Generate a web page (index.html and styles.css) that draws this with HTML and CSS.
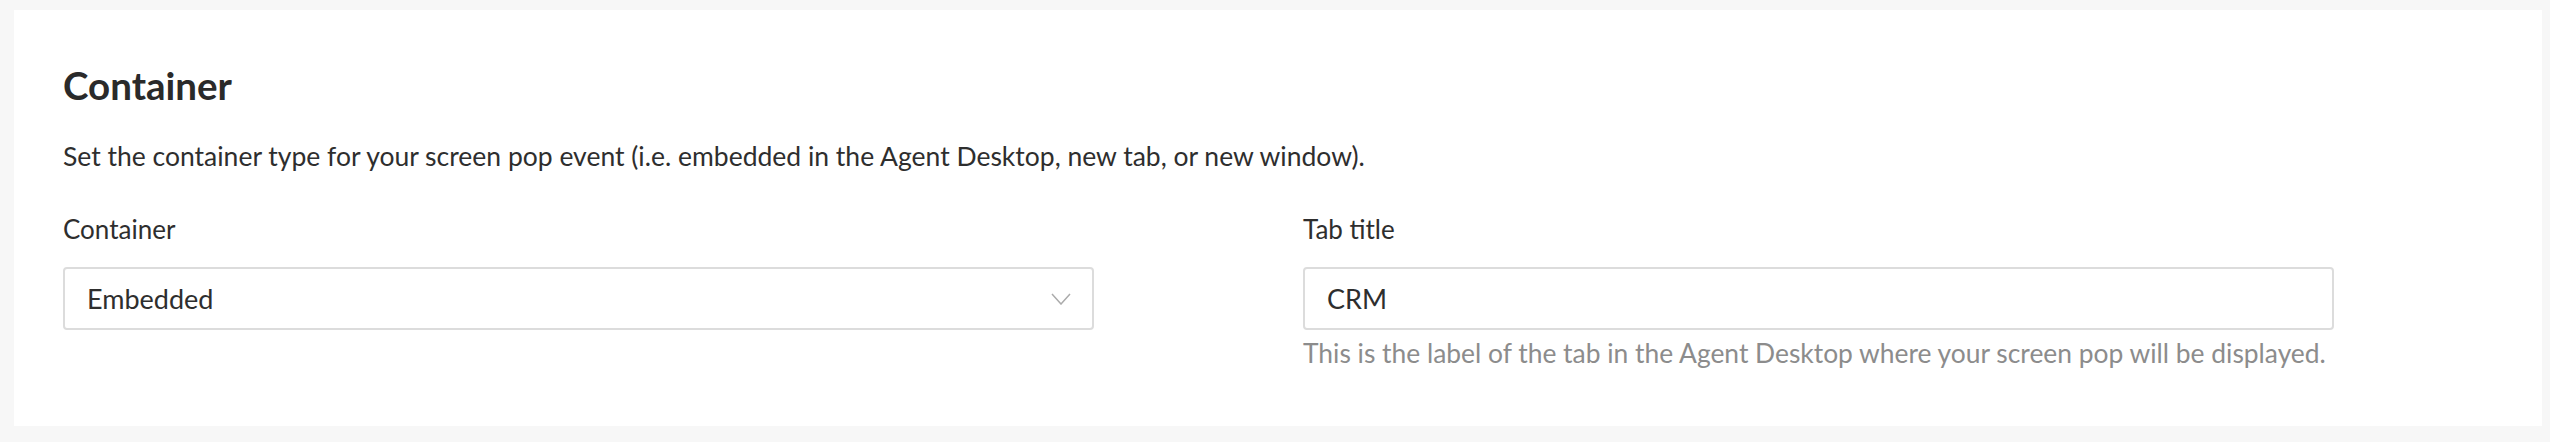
FILE: index.html
```html
<!DOCTYPE html>
<html lang="en">
<head>
<meta charset="utf-8">
<title>Container</title>
<link rel="stylesheet" href="styles.css">
</head>
<body>
<section class="card">
  <h2 class="title">Container</h2>
  <p class="desc">Set the container type for your screen pop event (i.e. embedded in the Agent Desktop, new tab, or new window).</p>
  <div class="fields">
    <div class="field">
      <label class="label">Container</label>
      <div class="control select">
        <span class="value">Embedded</span>
        <svg class="chev" width="20" height="12" viewBox="0 0 20 12"><path d="M1 1 L10 11 L19 1" fill="none" stroke="#ababab" stroke-width="1.5"/></svg>
      </div>
    </div>
    <div class="field">
      <label class="label">Tab title</label>
      <div class="control">
        <span class="value">CRM</span>
      </div>
      <p class="help">This is the label of the tab in the Agent Desktop where your screen pop will be displayed.</p>
    </div>
  </div>
</section>
</body>
</html>
```
FILE: styles.css
```css
html, body {
  margin: 0;
  padding: 0;
}
body {
  background: #f7f7f7;
  padding: 10px 8px 16px 14px;
  font-family: Lato, "Open Sans", sans-serif;
  color: #2e2e2e;
}
.card {
  background: #ffffff;
  height: 416px;
  box-sizing: border-box;
  padding: 52px 0 0 49px;
}
.title {
  margin: 0;
  font-size: 38.5px;
  line-height: 46px;
  font-weight: 700;
  color: #2a2a2a;
}
.desc {
  margin: 30px 0 0;
  font-size: 26.5px;
  line-height: 36px;
  color: #2e2e2e;
}
.fields {
  display: grid;
  grid-template-columns: 1031px 1031px;
  column-gap: 209px;
  margin-top: 38px;
}
.field {
  display: flex;
  flex-direction: column;
}
.label {
  font-size: 26px;
  line-height: 34px;
  color: #2e2e2e;
}
.control {
  margin-top: 21px;
  height: 63px;
  box-sizing: border-box;
  border: 2px solid #dcdcdc;
  border-radius: 4px;
  display: flex;
  align-items: center;
  justify-content: space-between;
  padding: 0 21px 0 22px;
}
.value {
  font-size: 27px;
  line-height: 32px;
  color: #2e2e2e;
}
.chev {
  display: block;
}
.help {
  margin: 6px 0 0;
  font-size: 26.4px;
  line-height: 34px;
  color: #8c8c8c;
}
```
